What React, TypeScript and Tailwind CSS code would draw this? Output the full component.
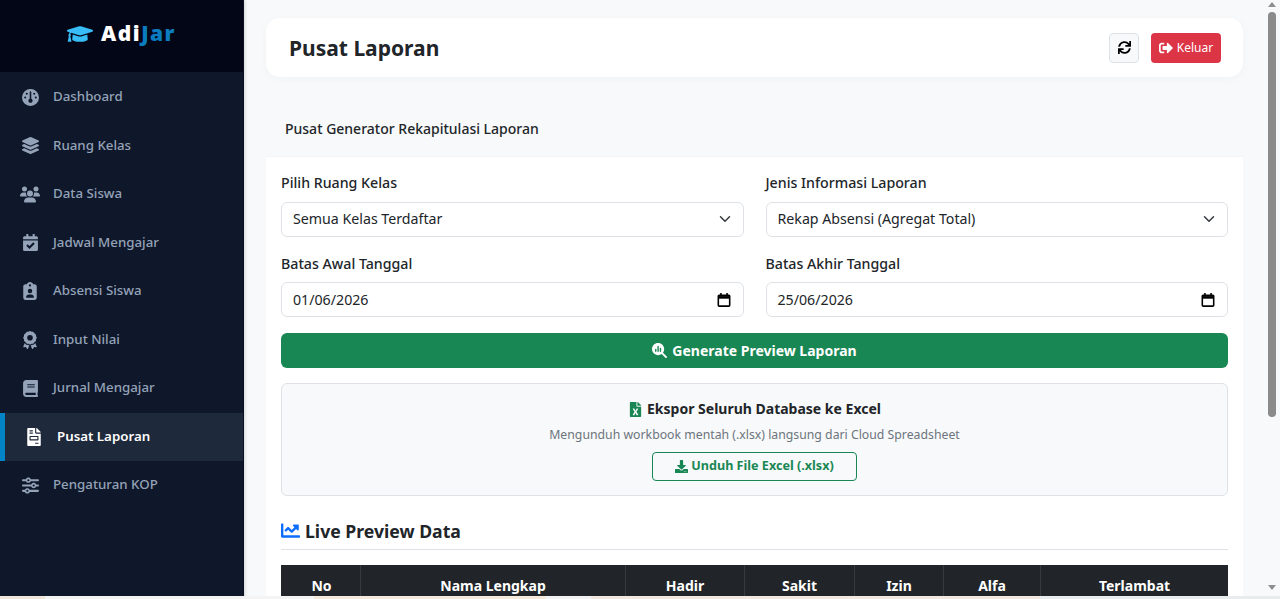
import { FaBook, FaCalendarCheck, FaGraduationCap, FaLayerGroup, FaFileInvoice, FaSync, FaSignOutAlt, FaFileExcel, FaDownload, FaChartLine } from "react-icons/fa";
import { FaAward, FaClipboardUser, FaGauge, FaMagnifyingGlassChart, FaSliders, FaUsers } from "react-icons/fa6";

const menu = [
  { label: "Dashboard", icon: FaGauge, size: "text-[17px]" },
  { label: "Ruang Kelas", icon: FaLayerGroup, size: "text-[17px]" },
  { label: "Data Siswa", icon: FaUsers, size: "text-[21px]" },
  { label: "Jadwal Mengajar", icon: FaCalendarCheck, size: "text-[17px]" },
  { label: "Absensi Siswa", icon: FaClipboardUser, size: "text-[18px]" },
  { label: "Input Nilai", icon: FaAward, size: "text-[18px]" },
  { label: "Jurnal Mengajar", icon: FaBook, size: "text-[17px]" },
  { label: "Pusat Laporan", icon: FaFileInvoice, size: "text-[18px]", active: true },
  { label: "Pengaturan KOP", icon: FaSliders, size: "text-[17px]" },
];

const kolom = [
  { label: "No", w: "w-[80px] pl-[2px]" },
  { label: "Nama Lengkap", w: "w-[265px]" },
  { label: "Hadir", w: "w-[119px]" },
  { label: "Sakit", w: "w-[110px]" },
  { label: "Izin", w: "w-[89px]" },
  { label: "Alfa", w: "w-[97px]" },
  { label: "Terlambat", w: "flex-1" },
];

const Chevron = () => (
  <svg viewBox="0 0 16 16" className="w-3 h-3" fill="none" stroke="#343a40" strokeWidth="2" strokeLinecap="round" strokeLinejoin="round">
    <path d="m2 5 6 6 6-6" />
  </svg>
);

const Kalender = () => (
  <svg viewBox="0 0 16 16" className="w-[14px] h-[14px]" fill="none" stroke="#000" strokeWidth="1.8">
    <rect x="1.5" y="2.5" width="13" height="12.5" rx="1" />
    <path d="M1.5 5h13" strokeWidth="3" />
    <path d="M4.5 0v3M11.5 0v3" />
  </svg>
);

const Field = ({ label, value, icon }: { label: string; value: string; icon: React.ReactNode }) => (
  <div className="flex flex-col">
    <label className="text-[14.2px] leading-[22px] font-medium text-[#212529] mb-[7.6px]">{label}</label>
    <div className="h-[35px] pl-[11px] pr-3 flex items-center justify-between bg-white border border-[#dee2e6] rounded-md text-[14.2px] text-[#212529]">
      <span>{value}</span>
      {icon}
    </div>
  </div>
);

const App = () => {
  return (
    <div className="h-[599px] w-[1280px] flex overflow-hidden relative bg-[#f8f9fa] font-['Noto_Sans',sans-serif]">
      {/* Sidebar */}
      <aside className="w-[244px] shrink-0 bg-[#0f172a] border-r border-[#0b1120] flex flex-col shadow-[1px_0_3px_rgba(0,0,0,0.15)] z-10">
        <div className="h-[72px] bg-[#020617] flex items-center justify-center gap-[8px] pb-[4px]">
          <FaGraduationCap className="text-[#38bdf8] text-[26px]" />
          <span className="text-[21px] font-black text-white tracking-[1.5px]">
            Adi<span className="text-[#0c7cc0]">Jar</span>
          </span>
        </div>
        <nav className="flex flex-col pt-[1px]">
          {menu.map((m) => {
            const Icon = m.icon;
            return (
              <div
                key={m.label}
                className={
                  m.active
                    ? "h-[48.5px] flex items-center pl-[19px] border-l-[5px] border-[#0284c7] bg-[#1e293b] text-white font-semibold"
                    : "h-[48.5px] flex items-center pl-[20px] text-[#94a3b8] font-medium"
                }
              >
                <span className={`w-[20px] flex justify-center mr-[13px] ${m.size}`}>
                  <Icon />
                </span>
                <span className="text-[13.3px]">{m.label}</span>
              </div>
            );
          })}
        </nav>
      </aside>

      {/* Konten */}
      <main className="flex-1 min-w-0 pl-[22px] pr-[24px] pt-[18px]">
        <header className="h-[59px] bg-white rounded-[14px] shadow-[0_2px_10px_rgba(0,0,0,0.03)] flex items-center justify-between pl-[23px] pr-[22px] mb-[24px]">
          <h1 className="text-[21px] font-bold text-[#212529] pt-[2px]">Pusat Laporan</h1>
          <div className="flex items-center gap-[12px]">
            <button className="w-[30px] h-[30px] flex items-center justify-center bg-[#f8f9fa] border border-[#dee2e6] rounded text-black text-[13px]">
              <FaSync />
            </button>
            <button className="h-[30px] w-[70px] flex items-center justify-center gap-[4px] bg-[#dc3545] rounded text-white text-[12px]">
              <FaSignOutAlt className="text-[14px]" /> Keluar
            </button>
          </div>
        </header>

        <section className="bg-white rounded-t-[14px]">
          <div className="h-[56px] bg-[#f8f9fa] border-b border-[#f4f5f7] flex items-center pl-[19px]">
            <h2 className="text-[14px] font-medium text-[#212529]">Pusat Generator Rekapitulasi Laporan</h2>
          </div>

          <div className="px-[15px] pt-[15px]">
            <div className="grid grid-cols-2 gap-x-[22px] gap-y-[16px]">
              <Field label="Pilih Ruang Kelas" value="Semua Kelas Terdaftar" icon={<Chevron />} />
              <Field label="Jenis Informasi Laporan" value="Rekap Absensi (Agregat Total)" icon={<Chevron />} />
              <Field label="Batas Awal Tanggal" value="01/06/2026" icon={<Kalender />} />
              <Field label="Batas Akhir Tanggal" value="25/06/2026" icon={<Kalender />} />
            </div>

            <button className="mt-[15.5px] w-full h-[35.6px] bg-[#198754] rounded-md text-white text-[14px] font-bold flex items-center justify-center gap-[5px]">
              <FaMagnifyingGlassChart className="text-[15px]" /> Generate Preview Laporan
            </button>

            <div className="mt-[15px] h-[113px] bg-[#f8f9fa] border border-[#dee2e6] rounded-md flex flex-col items-center pt-[14px]">
              <h3 className="text-[14px] leading-[22px] font-bold text-[#212529] flex items-center gap-[4px]">
                <FaFileExcel className="text-[#198754] text-[15px]" /> Ekspor Seluruh Database ke Excel
              </h3>
              <p className="text-[12.27px] leading-[18px] text-[#6c757d] mt-[6px]">
                Mengunduh workbook mentah (.xlsx) langsung dari Cloud Spreadsheet
              </p>
              <button className="mt-[8px] w-[205px] h-[29px] bg-transparent border border-[#198754] rounded text-[#198754] text-[12.6px] font-bold flex items-center justify-center gap-[3px]">
                <FaDownload className="text-[13px]" /> Unduh File Excel (.xlsx)
              </button>
            </div>

            <h3 className="mt-[19px] h-[31px] text-[17.65px] font-bold text-[#212529] flex items-center gap-[5px]">
              <FaChartLine className="text-[#0d6efd] text-[19px]" /> Live Preview Data
            </h3>
            <div className="mt-[3px] border-b border-[#dee2e6]" />

            <div className="mt-[15px] flex bg-[#212529] text-white text-[14px] font-bold h-[40px]">
              {kolom.map((k) => (
                <div key={k.label} className={`${k.w} flex items-center justify-center border-r border-[#373b3e] last:border-r-0`}>
                  {k.label}
                </div>
              ))}
            </div>
          </div>
        </section>
      </main>

      {/* Scrollbar */}
      <div className="w-[13px] shrink-0 bg-[#f8f9fa] flex flex-col items-start pl-[1px]">
        <svg viewBox="0 0 8 5" className="w-[8px] h-[5px] mt-[2px] fill-[#8f8f8f]">
          <path d="M4 0 8 5H0z" />
        </svg>
        <div className="w-[8px] h-[405px] mt-[5px] rounded-full bg-[#8b8b8b]" />
        <div className="flex-1" />
        <svg viewBox="0 0 8 5" className="w-[8px] h-[5px] mb-[9px] fill-[#8f8f8f]">
          <path d="M0 0h8L4 5z" />
        </svg>
      </div>

      {/* Potongan taskbar di tepi bawah */}
      <div className="absolute left-0 right-0 bottom-0 h-[3px] flex z-20">
        <div className="w-[45px] bg-[#f0e6da]" />
        <div className="w-[269px] bg-[#f4f4f4]" />
        <div className="w-[232px] bg-[#f3e9dd]" />
        <div className="w-[45px] bg-[#f2f2f2]" />
        <div className="w-[449px] bg-[#f1e9e0]" />
        <div className="flex-1 bg-[#e9ecec]" />
      </div>
    </div>
  );
};

export default App;
